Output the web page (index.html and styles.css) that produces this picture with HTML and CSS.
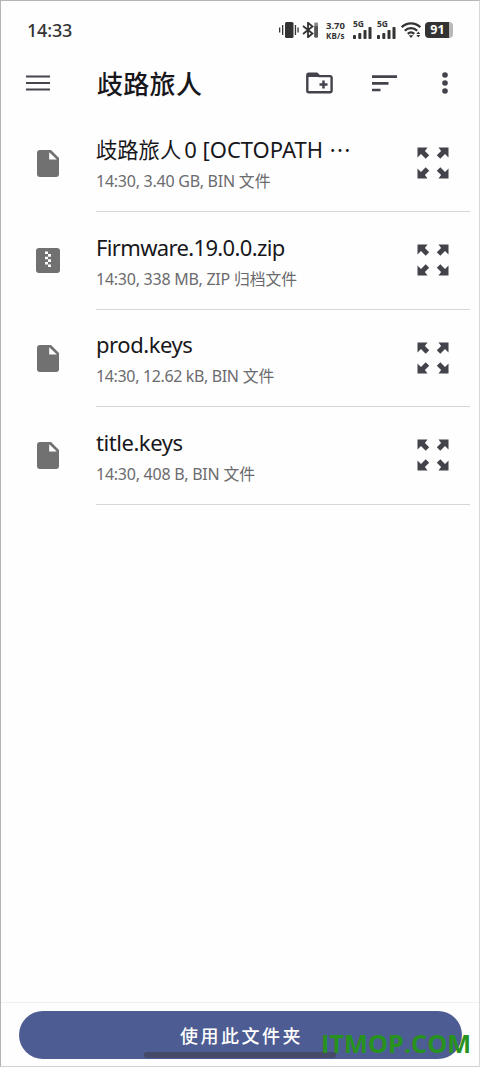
FILE: index.html
```html
<!DOCTYPE html>
<html lang="zh-CN">
<head>
<meta charset="utf-8">
<title>歧路旅人</title>
<link rel="stylesheet" href="styles.css">
</head>
<body>
<svg class="defs" aria-hidden="true">
  <symbol id="file" viewBox="0 0 22 27"><path fill="#717171" d="M3 0h11l8 8v16a3 3 0 0 1-3 3H3a3 3 0 0 1-3-3V3a3 3 0 0 1 3-3z"/><path fill="#fff" d="M12.2 2.200v7.400h7.600z"/></symbol>
  <symbol id="expand" viewBox="0 0 32 32"><g fill="#43434b"><path d="M.5.5H10.500L7.900 3.900l4.300 4.300-3.500 3.500-4.700-4.700L.5 10.500z"/><path d="M31.500.5H21.500l2.600 3.400-4.300 4.300 3.500 3.500L28 7l3.500 3.500z"/><path d="M.5 31.500h10l-2.600-3.400 4.300-4.300-3.500-3.500L4 25 .5 21.500z"/><path d="M31.500 31.500h-10l2.600-3.400-4.300-4.300 3.500-3.500L28 25l3.500-3.500z"/></g></symbol>
  <symbol id="signal" viewBox="0 0 19 12"><g fill="#333"><rect x="0" y="8" width="3" height="4" rx=".8"/><rect x="5.300" y="6" width="3" height="6" rx=".8"/><rect x="10.500" y="3" width="3" height="9" rx=".8"/><rect x="15.500" y="0" width="3" height="12" rx=".8"/></g></symbol>
</svg>
<div class="screen">
  <header class="status">
    <span class="clock">14:33</span>
    <svg class="vibrate" viewBox="0 0 20 16"><g fill="#333"><rect x="6" y="0" width="8.500" height="16" rx="1.500"/><rect x="3" y="3" width="1.300" height="10"/><rect x="0" y="5.500" width="1.300" height="5"/><rect x="15.800" y="3" width="1.300" height="10"/><rect x="18.400" y="5.500" width="1.300" height="5"/></g></svg>
    <svg class="bluetooth" viewBox="0 0 17 16"><path fill="none" stroke="#333" stroke-width="1.800" d="M1 4l9.500 7.500L6 15.200V.8l4.500 3.700L1 12"/><rect x="12.300" y=".5" width="3.700" height="15" rx="1" fill="#888"/><rect x="12.300" y="4" width="3.700" height="11.500" rx="1" fill="#555"/></svg>
    <div class="speed"><span>3.70</span><span>KB/s</span></div>
    <div class="cell"><span>5G</span><svg><use href="#signal"/></svg></div>
    <div class="cell"><span>5G</span><svg><use href="#signal"/></svg></div>
    <svg class="wifi" viewBox="0 0 20 16"><g fill="none" stroke="#333" stroke-width="2.300"><path d="M.7 5.200a13 13 0 0 1 18.600 0"/><path d="M3.800 8.700a8.800 8.800 0 0 1 12.400 0"/><path d="M6.800 11.800a4.600 4.600 0 0 1 6.400 0"/></g><path fill="#333" d="M7.700 13.300h4.600L10 16zM17.300 9.600l2 2.500h-4zM17.300 15.600l2-2.500h-4z"/></svg>
    <div class="battery"><span>91</span></div>
  </header>
  <nav class="toolbar">
    <svg class="menu" viewBox="0 0 24 18"><path stroke="#45454d" stroke-width="2" d="M0 2.500h24M0 9h24M0 15.500h24"/></svg>
    <h1>歧路旅人</h1>
    <svg class="folder" viewBox="0 0 27 22"><path fill="none" stroke="#43434b" stroke-width="2.400" stroke-linejoin="round" d="M2.800 1.700h8l2.300 2.400h11a1.500 1.500 0 0 1 1.500 1.500v13.200a1.500 1.500 0 0 1-1.500 1.500H2.800a1.500 1.500 0 0 1-1.500-1.500V3.200a1.500 1.500 0 0 1 1.500-1.500z"/><path fill="#43434b" d="M2.500 1.500h8.500l2.500 3.500h-12z"/><path stroke="#43434b" stroke-width="2.500" d="M13.500 12.500h8M17.500 8.500v8"/></svg>
    <svg class="sort" viewBox="0 0 25 17"><path stroke="#43434b" stroke-width="2.600" d="M0 1.600h25M0 8.400h16.500M0 15h8.500"/></svg>
    <svg class="more" viewBox="0 0 6 22"><g fill="#43434b"><circle cx="3" cy="3" r="2.800"/><circle cx="3" cy="11" r="2.800"/><circle cx="3" cy="19" r="2.800"/></g></svg>
  </nav>
  <main class="list">
    <div class="row">
      <svg class="file"><use href="#file"/></svg>
      <div class="entry"><div class="text"><p class="name"><span class="hanzi">歧路旅人</span><span>0 [OCTOPATH</span><span class="dots">⋯</span></p><p class="meta">14:30, 3.40 GB, BIN<span>文件</span></p></div><svg class="expand"><use href="#expand"/></svg></div>
    </div>
    <div class="row">
      <svg class="zip" viewBox="0 0 24 25"><rect width="24" height="25" rx="3" fill="#717171"/><path fill="#fff" d="M9 3.500h3v2.600H9zM12 6.100h3v2.600h-3zM9 8.700h3v2.600H9zM12 11.300h3v2.600h-3zM9 13.900h3v2.600H9zM12 16.500h3v2.600h-3z"/></svg>
      <div class="entry"><div class="text"><p class="name n2">Firmware.19.0.0.zip</p><p class="meta">14:30, 338 MB, ZIP<span>归档文件</span></p></div><svg class="expand"><use href="#expand"/></svg></div>
    </div>
    <div class="row">
      <svg class="file"><use href="#file"/></svg>
      <div class="entry"><div class="text"><p class="name n3">prod.keys</p><p class="meta m3">14:30, 12.62 kB, BIN<span>文件</span></p></div><svg class="expand"><use href="#expand"/></svg></div>
    </div>
    <div class="row">
      <svg class="file"><use href="#file"/></svg>
      <div class="entry"><div class="text"><p class="name n4">title.keys</p><p class="meta">14:30, 408 B, BIN<span>文件</span></p></div><svg class="expand"><use href="#expand"/></svg></div>
    </div>
  </main>
  <footer class="bottom">
    <button class="use">使用此文件夹</button>
    <div class="handle"></div>
    <div class="watermark">ITMOP.COM</div>
  </footer>
</div>
</body>
</html>
```
FILE: styles.css
```css
* { box-sizing: border-box; }
body { margin: 0; background: #fff; font-family: "Noto Sans", "Noto Sans CJK SC", sans-serif; }
h1, p { margin: 0; font-weight: 400; }
svg { display: block; flex: none; }
.defs { position: absolute; width: 0; height: 0; }
.screen { width: 480px; height: 1067px; border: 1px solid #b5b5b5; border-right-color: #d8d8d8; border-bottom-color: #d0d0d0; display: flex; flex-direction: column; overflow: hidden; background: #fefefe; }

.status { height: 58px; padding-left: 26px; display: flex; align-items: center; flex: none; color: #333; }
.clock { width: 252px; font-size: 18px; font-weight: 500; letter-spacing: -.2px; white-space: nowrap; }
.vibrate { width: 20px; height: 16px; }
.bluetooth { width: 17px; height: 16px; margin-left: 3px; }
.speed { width: 21px; height: 19px; margin-left: 7px; display: flex; flex-direction: column; justify-content: space-between; font-weight: 700; line-height: 9px; white-space: nowrap; }
.speed span:first-child { font-size: 9.500px; }
.speed span:last-child { font-size: 8px; letter-spacing: .2px; }
.cell { width: 19px; margin-left: 6px; height: 18px; display: flex; flex-direction: column; justify-content: space-between; }
.cell span { font-size: 8.500px; font-weight: 700; line-height: 6px; }
.cell svg { width: 19px; height: 12px; margin-top: -1px; }
.cell + .cell { margin-left: 5px; }
.wifi { width: 20px; height: 16px; margin-left: 5px; }
.battery { width: 28px; height: 16px; margin-left: 4px; display: flex; background: linear-gradient(90deg, #333 0 24px, #b8b8b8 24px); border-radius: 4px; color: #fff; }
.battery span { width: 25px; text-align: center; font-size: 12.500px; font-weight: 700; line-height: 16px; }

.toolbar { height: 55px; padding-left: 24.500px; padding-bottom: 7px; display: flex; align-items: center; flex: none; }
.menu { width: 24px; height: 18px; }
.toolbar h1 { width: 209px; margin-left: 47.500px; padding-top: 2px; font-size: 26px; line-height: 36px; letter-spacing: .3px; font-weight: 500; color: #17171c; }
.folder { width: 27px; height: 22px; }
.sort { width: 25px; height: 17px; margin-left: 38.500px; }
.more { width: 6px; height: 22px; margin-left: 45.500px; }

.list { flex: 1; padding-top: .4px; }
.row { height: 97.600px; padding-left: 35px; display: flex; align-items: center; }
.file { width: 22px; height: 27px; margin: 0 1px; }
.zip { width: 24px; height: 25px; }
.entry { width: 374px; height: 97.600px; margin-left: 36px; border-bottom: 1px solid #d6d6d6; display: flex; align-items: center; }
.text { width: 321px; padding-top: 4px; white-space: nowrap; }
.name { height: 32px; font-size: 22px; line-height: 31px; color: #17171b; }
.hanzi { font-size: 21.300px; margin-right: 3px; }
.dots { margin-left: 6px; }
.n2 { letter-spacing: -.65px; }
.n3, .n4 { letter-spacing: -.45px; }
.meta { height: 29px; font-size: 16px; line-height: 30px; letter-spacing: -.25px; color: #6b6b6e; }
.meta span { margin-left: 4px; font-size: 15.800px; letter-spacing: 0; }
.m3 { letter-spacing: -.35px; }
.expand { width: 32px; height: 32px; }

.bottom { position: relative; height: 64px; flex: none; padding: 8px 17px 0 18px; border-top: 1px solid #f0f0f0; }
.use { display: block; width: 443px; height: 48px; padding: 0 0 0 2px; border: 0; border-radius: 24px; background: #4d5c92; color: #fff; font: 500 18px "Noto Sans CJK SC", sans-serif; letter-spacing: 2.500px; }
.handle { position: absolute; left: 143px; top: 49px; width: 192px; height: 6px; border-radius: 3px; background: #454a68; }
.watermark { position: absolute; left: 320px; top: 22px; font: 700 25.300px/36px "Open Sans", sans-serif; color: #28921e; white-space: nowrap; }
```
